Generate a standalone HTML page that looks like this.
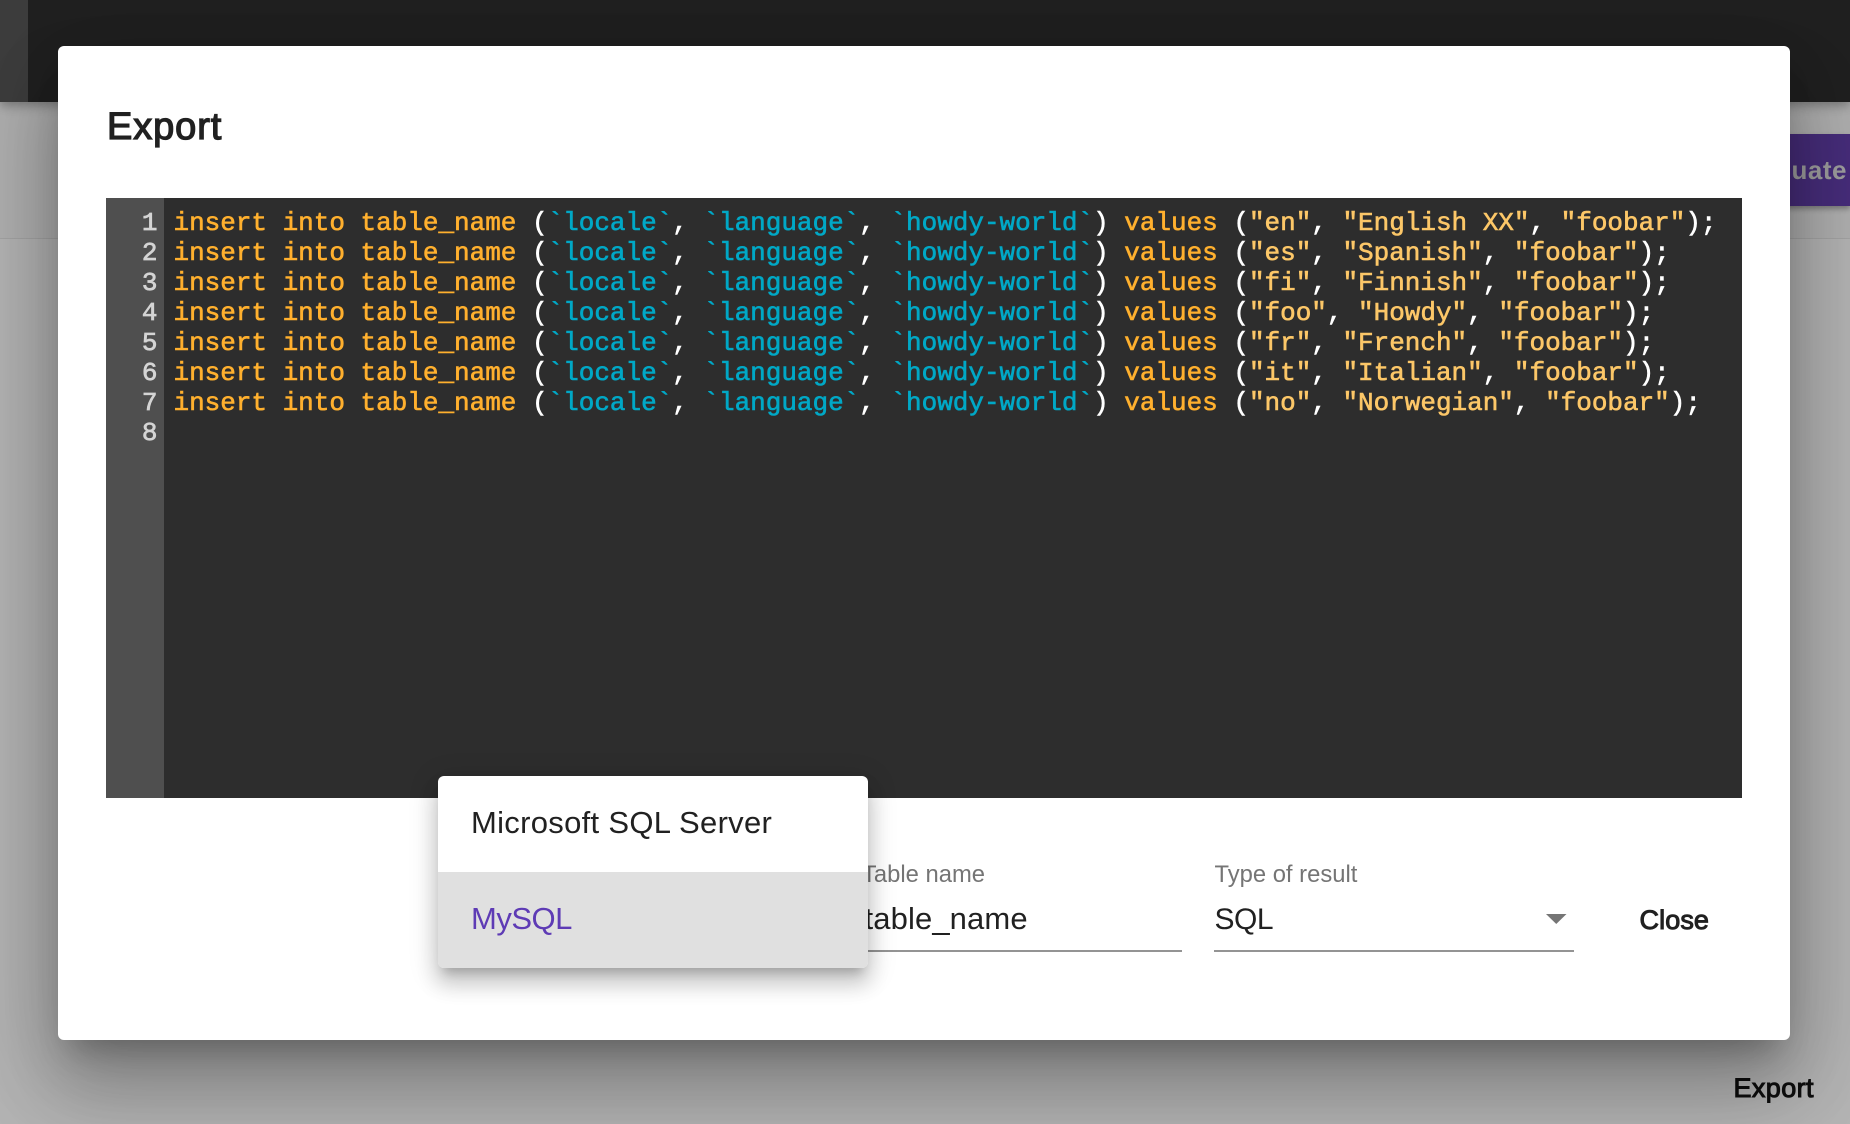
<!DOCTYPE html>
<html><head><meta charset="utf-8"><style>
html,body{margin:0;padding:0;width:1850px;height:1124px;overflow:hidden;background:#b4b4b4}
body{position:relative;font-family:"Liberation Sans",sans-serif}
.a{position:absolute}
.t{position:absolute;white-space:pre;line-height:40px}
#code{left:173.5px;top:208px;font:26px/30px "Liberation Mono",monospace;color:#fff;white-space:pre;-webkit-text-stroke:.6px;letter-spacing:-.017px}
#nums{right:1692.5px;top:208px;font:26px/30px "Liberation Mono",monospace;color:#d4d4d4;text-align:right;white-space:pre;-webkit-text-stroke:.7px}
.k{color:#ffb02e}.f{color:#00a8c6}.s{color:#fcc768}
</style></head><body>
<div class="a" style="left:0;top:102px;width:1850px;height:136px;background:#b0b0b0;box-shadow:0 1px 0 #a4a4a4"></div>
<div class="a" style="left:0;top:0;width:1850px;height:102px;background:#202020;box-shadow:0 4px 10px rgba(0,0,0,.3)"></div>
<div class="a" style="left:0;top:0;width:28px;height:102px;background:#3d3d3d"></div>
<div class="a" style="left:1700px;top:134px;width:150px;height:72px;background:#472d7b;box-shadow:0 3px 5px rgba(0,0,0,.3)"></div>
<div class="t" style="left:1700px;top:150px;width:147px;text-align:right;font-size:26px;font-weight:bold;color:#9f9f9f;letter-spacing:.5px">Evaluate</div>
<div class="t" style="left:1733.5px;top:1068px;font-size:27px;color:#0e0e0e;letter-spacing:.4px;-webkit-text-stroke:1px">Export</div>
<div class="a" style="left:58px;top:46px;width:1732px;height:994px;background:#fff;border-radius:6px;box-shadow:0 22px 30px -14px rgba(0,0,0,.25),0 48px 76px 6px rgba(0,0,0,.19),0 18px 92px 16px rgba(0,0,0,.16)"></div>
<div class="t" style="left:107px;top:107px;font-size:38px;color:#212121;letter-spacing:.9px;-webkit-text-stroke:1.3px">Export</div>
<div class="a" style="left:106px;top:198px;width:1636px;height:600px;background:#2d2d2d"></div>
<div class="a" style="left:106px;top:198px;width:58px;height:600px;background:#4f4f4f"></div>
<div class="a" id="nums">1
2
3
4
5
6
7
8</div>
<div class="a" id="code"><span class="k">insert into table_name</span> (<span class="f">`locale`</span>, <span class="f">`language`</span>, <span class="f">`howdy-world`</span>) <span class="k">values</span> (<span class="s">"en"</span>, <span class="s">"English XX"</span>, <span class="s">"foobar"</span>);
<span class="k">insert into table_name</span> (<span class="f">`locale`</span>, <span class="f">`language`</span>, <span class="f">`howdy-world`</span>) <span class="k">values</span> (<span class="s">"es"</span>, <span class="s">"Spanish"</span>, <span class="s">"foobar"</span>);
<span class="k">insert into table_name</span> (<span class="f">`locale`</span>, <span class="f">`language`</span>, <span class="f">`howdy-world`</span>) <span class="k">values</span> (<span class="s">"fi"</span>, <span class="s">"Finnish"</span>, <span class="s">"foobar"</span>);
<span class="k">insert into table_name</span> (<span class="f">`locale`</span>, <span class="f">`language`</span>, <span class="f">`howdy-world`</span>) <span class="k">values</span> (<span class="s">"foo"</span>, <span class="s">"Howdy"</span>, <span class="s">"foobar"</span>);
<span class="k">insert into table_name</span> (<span class="f">`locale`</span>, <span class="f">`language`</span>, <span class="f">`howdy-world`</span>) <span class="k">values</span> (<span class="s">"fr"</span>, <span class="s">"French"</span>, <span class="s">"foobar"</span>);
<span class="k">insert into table_name</span> (<span class="f">`locale`</span>, <span class="f">`language`</span>, <span class="f">`howdy-world`</span>) <span class="k">values</span> (<span class="s">"it"</span>, <span class="s">"Italian"</span>, <span class="s">"foobar"</span>);
<span class="k">insert into table_name</span> (<span class="f">`locale`</span>, <span class="f">`language`</span>, <span class="f">`howdy-world`</span>) <span class="k">values</span> (<span class="s">"no"</span>, <span class="s">"Norwegian"</span>, <span class="s">"foobar"</span>);</div>
<div class="t" style="left:862px;top:855px;font-size:23.8px;color:#757575">Table name</div>
<div class="t" style="left:864.5px;top:899px;font-size:31px;color:#212121;letter-spacing:.12px">table_name</div>
<div class="a" style="left:860px;top:950px;width:322px;height:2px;background:#949494"></div>
<div class="t" style="left:1214.5px;top:855px;font-size:23.8px;color:#757575">Type of result</div>
<div class="t" style="left:1214.5px;top:900px;font-size:30px;color:#212121;letter-spacing:-.5px">SQL</div>
<div class="a" style="left:1214px;top:950px;width:360px;height:2px;background:#949494"></div>
<svg class="a" style="left:1546px;top:914px" width="21" height="10"><path d="M0 0H20.5L10.25 10Z" fill="#757575"/></svg>
<div class="t" style="left:1639.5px;top:900px;font-size:27px;color:#212121;letter-spacing:.1px;-webkit-text-stroke:1px">Close</div>
<div class="a" style="left:438px;top:776px;width:430px;height:192px;border-radius:6px;background:#fff;overflow:hidden;box-shadow:0 10px 10px -6px rgba(0,0,0,.2),0 16px 20px 2px rgba(0,0,0,.14),0 6px 28px 4px rgba(0,0,0,.12)">
<div class="a" style="left:0;top:96px;width:430px;height:96px;background:#e0e0e0"></div>
<div class="t" style="left:33px;top:27px;font-size:31px;color:#212121;letter-spacing:.3px">Microsoft SQL Server</div>
<div class="t" style="left:33px;top:123px;font-size:31px;color:#5e3bb5;letter-spacing:-.5px">MySQL</div>
</div>
</body></html>
